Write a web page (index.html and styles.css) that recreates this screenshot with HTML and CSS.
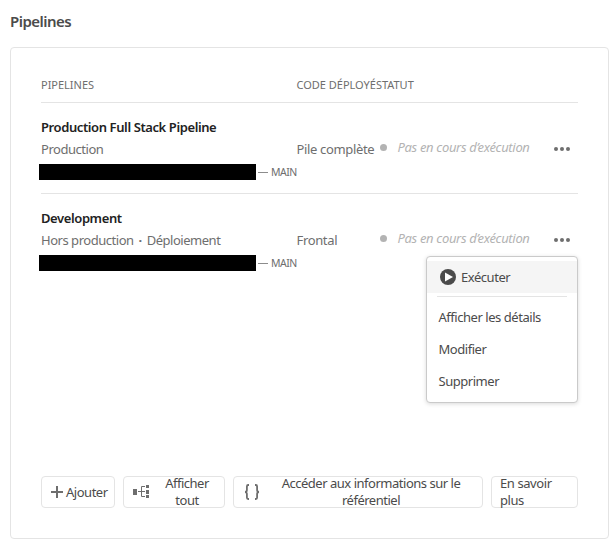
FILE: index.html
```html
<!DOCTYPE html>
<html lang="fr">
<head>
<meta charset="utf-8">
<title>Pipelines</title>
<link rel="stylesheet" href="styles.css">
</head>
<body>
<h1>Pipelines</h1>
<main class="card">
  <header class="grid head">
    <span>PIPELINES</span>
    <span>CODE DÉPLOYÉSTATUT</span>
  </header>
  <section class="grid row first">
    <div class="info">
      <h2>Production Full Stack Pipeline</h2>
      <p class="kind">Production</p>
      <div class="repo"><span class="redacted"></span><span class="dash"></span><span class="branch">MAIN</span></div>
    </div>
    <span class="code">Pile complète</span>
    <div class="status"><i class="dot"></i><em>Pas en cours d’exécution</em></div>
    <div class="more"><svg width="16" height="4" viewBox="0 0 16 4"><circle cx="2" cy="2" r="2"/><circle cx="8" cy="2" r="2"/><circle cx="14" cy="2" r="2"/></svg></div>
  </section>
  <section class="grid row">
    <div class="info">
      <h2>Development</h2>
      <p class="kind">Hors production <b class="sep">·</b> Déploiement</p>
      <div class="repo"><span class="redacted"></span><span class="dash"></span><span class="branch">MAIN</span></div>
    </div>
    <span class="code">Frontal</span>
    <div class="status"><i class="dot"></i><em>Pas en cours d’exécution</em></div>
    <div class="more"><svg width="16" height="4" viewBox="0 0 16 4"><circle cx="2" cy="2" r="2"/><circle cx="8" cy="2" r="2"/><circle cx="14" cy="2" r="2"/></svg></div>
    <nav class="menu">
      <div class="item active"><svg width="16" height="16" viewBox="0 0 16 16"><circle cx="8" cy="8" r="8"/><path d="M5 3.600v8.800L13 8z" fill="#fff"/></svg><span>Exécuter</span></div>
      <hr>
      <div class="item">Afficher les détails</div>
      <div class="item">Modifier</div>
      <div class="item">Supprimer</div>
    </nav>
  </section>
  <footer class="actions">
    <button class="btn add"><svg width="12" height="12" viewBox="0 0 12 12"><path d="M0 6h12M6 0v12" stroke="#6e6e6e" stroke-width="2"/></svg><span>Ajouter</span></button>
    <button class="btn all"><svg width="17" height="14" viewBox="0 0 17 14"><path d="M0 4h4v6H0zM13 0h3v3h-3zM13 5h3v4h-3zM13 10h3v3h-3z" fill="#6e6e6e"/><path d="M5 6.500h7M12 1.500H8.500v10H12" fill="none" stroke="#6e6e6e"/></svg><span class="label">Afficher<br>tout</span></button>
    <button class="btn access"><svg width="16" height="16" viewBox="0 0 16 16"><path d="M5 1H4.200Q2.900 1 2.900 2.500V6Q2.900 8 1 8Q2.900 8 2.900 10v3.500Q2.900 15 4.200 15H5M11 1h.8q1.300 0 1.300 1.500V6q0 2 1.900 2q-1.900 0-1.900 2v3.500q0 1.500-1.300 1.500H11" fill="none" stroke="#6e6e6e" stroke-width="1.800"/></svg><span class="label">Accéder aux informations sur le<br>référentiel</span></button>
    <button class="btn learn"><span>En savoir<br>plus</span></button>
  </footer>
</main>
</body>
</html>
```
FILE: styles.css
```css
* { box-sizing: border-box; }
body { margin: 0; padding: 11px 7px 5px 10px; height: 544px; background: #fff; color: #4b4b4b; font: 13px/20px "Noto Sans", sans-serif; letter-spacing: -.5px; white-space: nowrap; overflow: hidden; }
h1, h2, p { margin: 0; }
h1 { font-size: 15px; line-height: 20px; height: 36px; font-weight: 600; letter-spacing: -.53px; }
.card { height: 492px; border: 1px solid #e4e4e4; border-radius: 4px; padding: 24px 30px 30px; display: flex; flex-direction: column; }
.grid { display: grid; grid-template-columns: 255.500px 83px 155.500px 1fr; }
.head { height: 31px; border-bottom: 1px solid #e4e4e4; font-size: 11px; line-height: 26px; color: #6e6e6e; letter-spacing: -.01px; }
.row { position: relative; height: 91px; padding-top: 14px; color: #6e6e6e; }
.first { border-bottom: 1px solid #e4e4e4; }
h2 { font-size: 13px; line-height: 20px; font-weight: 600; color: #222; letter-spacing: -.4px; }
.kind { height: 22px; line-height: 22px; padding-top: 1px; letter-spacing: -.47px; }
.sep { padding: 0 2px; }
.repo { display: flex; align-items: center; height: 16px; margin: 5px 0 0 -2px; }
.redacted { flex: none; width: 217px; height: 16px; background: #000; }
.dash { flex: none; width: 10px; height: 1px; margin: 0 3px 0 2px; background: #8c8c8c; }
.branch { font-size: 10.500px; letter-spacing: -.5px; }
.code { padding-top: 22px; letter-spacing: -.35px; }
.status { display: flex; align-items: center; height: 20px; margin-top: 20px; }
.dot { width: 7px; height: 7px; border-radius: 50%; background: #b3b3b3; margin-right: 11px; }
.status em { color: #b3b3b3; letter-spacing: -.33px; }
.more { padding-top: 22px; margin-left: 19px; }
.more svg { fill: #6e6e6e; display: block; margin-top: 8px; }
.menu { position: absolute; left: 385px; top: 62px; width: 152px; height: 147px; background: #fff; border: 1px solid #cacaca; border-radius: 4px; padding-top: 4px; box-shadow: 0 1px 4px rgba(0,0,0,.15); color: #4b4b4b; }
.item { height: 32px; padding-left: 11.500px; display: flex; align-items: center; letter-spacing: -.46px; }
.active { background: #f5f5f5; gap: 5px; padding-left: 13px; }
.active svg { fill: #4b4b4b; }
.menu hr { height: 1px; border: 0; background: #e4e4e4; margin: 3px 10px 4px; }
.actions { display: flex; gap: 8px; margin-top: auto; height: 32px; }
.btn { height: 32px; border: 1px solid #e4e4e4; border-radius: 4px; padding: 0; background: #fff; color: #4b4b4b; font: inherit; line-height: 17px; letter-spacing: -.48px; display: flex; align-items: center; }
.btn svg { flex: none; }
.add { width: 74px; padding-left: 9px; gap: 3px; }
.all { width: 102px; padding-left: 9px; }
.access { width: 250px; padding-left: 10px; }
.learn { width: 87px; padding-left: 8px; text-align: left; letter-spacing: -.42px; }
.label { flex: 1; text-align: center; }
```
